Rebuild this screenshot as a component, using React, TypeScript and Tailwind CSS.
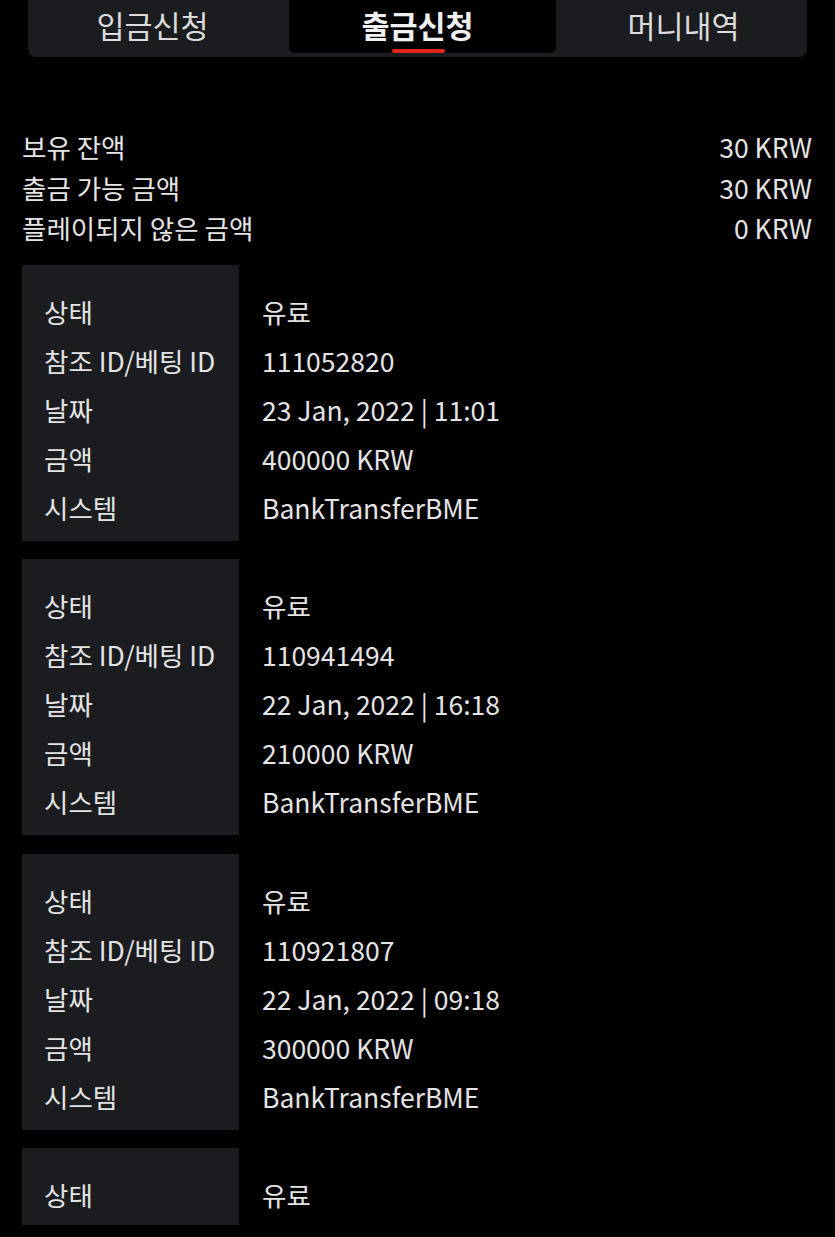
const tabs = [
  { label: "입금신청", active: false, cell: "pr-4" },
  { label: "출금신청", active: true, cell: "pr-[10px]" },
  { label: "머니내역", active: false, cell: "pl-[7px]" },
];

const balances = [
  { label: "보유 잔액", value: "30 KRW" },
  { label: "출금 가능 금액", value: "30 KRW" },
  { label: "플레이되지 않은 금액", value: "0 KRW" },
];

type Withdrawal = {
  status: string;
  refId?: string;
  date?: string;
  amount?: string;
  system?: string;
};

// last entry is only partly on screen, so it carries just its status row
const withdrawals: Withdrawal[] = [
  { status: "유료", refId: "111052820", date: "23 Jan, 2022 | 11:01", amount: "400000 KRW", system: "BankTransferBME" },
  { status: "유료", refId: "110941494", date: "22 Jan, 2022 | 16:18", amount: "210000 KRW", system: "BankTransferBME" },
  { status: "유료", refId: "110921807", date: "22 Jan, 2022 | 09:18", amount: "300000 KRW", system: "BankTransferBME" },
  { status: "유료" },
];

function WithdrawalCard({ item }: { item: Withdrawal }) {
  const rows = [
    ["상태", item.status],
    ["참조 ID/베팅 ID", item.refId],
    ["날짜", item.date],
    ["금액", item.amount],
    ["시스템", item.system],
  ].filter(([, value]) => value !== undefined);
  const partial = rows.length < 5;

  return (
    <div className="flex shrink-0">
      <div
        className={`w-[217px] shrink-0 bg-[#1b1c20] pl-[22px] pt-[22px] ${partial ? "pb-[6px]" : "pb-[9px]"}`}
      >
        {rows.map(([label]) => (
          <div key={label} className="h-[49px] leading-[49px]">
            {label}
          </div>
        ))}
      </div>
      <div className="pl-[23px] pt-[22px]">
        {rows.map(([label, value]) => (
          <div key={label} className="h-[49px] leading-[49px]">
            {value}
          </div>
        ))}
      </div>
    </div>
  );
}

export default function App() {
  return (
    <div
      className="h-[1237px] overflow-hidden bg-black text-[26.5px] text-[#e4e4e4]"
      style={{ fontFamily: '"Noto Sans CJK KR", "Noto Sans", sans-serif' }}
    >
      <div className="mx-[28px] grid h-[57px] grid-cols-[257px_267px_248px] rounded-b-lg bg-[#1b1c20] px-1 pb-1">
        {tabs.map((tab) => (
          <div
            key={tab.label}
            className={`relative flex items-center justify-center rounded-b-md text-[30.5px] ${tab.cell} ${
              tab.active ? "bg-black font-bold text-[#f0f0f0]" : "text-[#dcdcdc]"
            }`}
          >
            <span className="-mt-[2px]">{tab.label}</span>
            {tab.active && (
              <span className="absolute bottom-0 left-[103px] h-[4px] w-[53px] rounded-full bg-[#e0261c]" />
            )}
          </div>
        ))}
      </div>

      <div className="mt-[70px] pl-[22px] pr-[23px]">
        {balances.map((row) => (
          <div key={row.label} className="flex h-[40.5px] items-center justify-between">
            <span>{row.label}</span>
            <span>{row.value}</span>
          </div>
        ))}
      </div>

      <div className="mt-[16px] flex flex-col gap-[18.5px] px-[22px]">
        {withdrawals.map((item, index) => (
          <WithdrawalCard key={index} item={item} />
        ))}
      </div>
    </div>
  );
}
